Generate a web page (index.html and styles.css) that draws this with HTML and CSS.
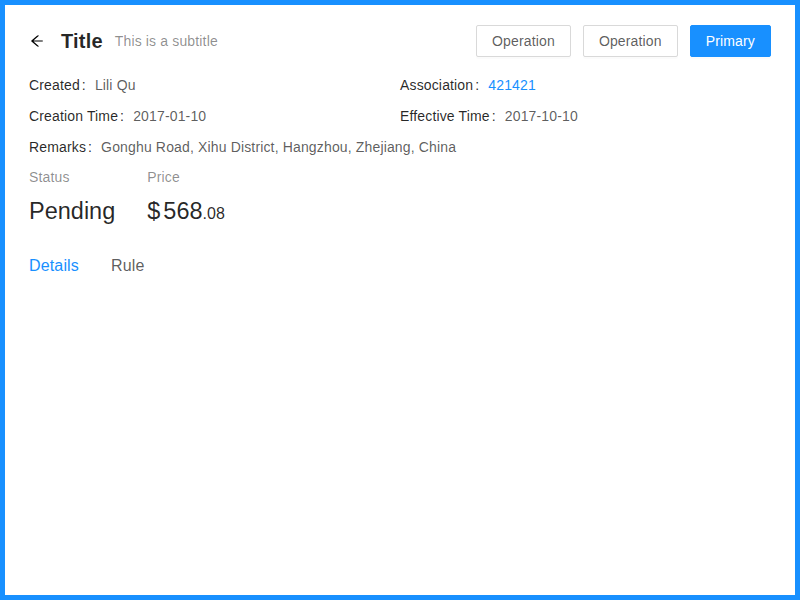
FILE: index.html
```html
<!DOCTYPE html>
<html>
<head>
<meta charset="utf-8">
<link rel="stylesheet" href="styles.css">
</head>
<body>
<div class="frame">
  <div class="page-header">
    <div class="heading">
      <div class="heading-left">
        <span class="back">
          <svg viewBox="0 0 1024 1024" width="16" height="16" fill="currentColor"><path d="M872 474H286.9l350.2-304c5.6-4.9 2.2-14-5.2-14h-88.5c-3.9 0-7.6 1.4-10.5 3.9L155 487.8a31.96 31.96 0 000 48.3L535.1 866c1.5 1.3 3.3 2 5.2 2h91.5c7.4 0 10.8-9.2 5.2-14L286.9 550H872c4.4 0 8-3.6 8-8v-60c0-4.4-3.6-8-8-8z"/></svg>
        </span>
        <span class="title">Title</span>
        <span class="subtitle">This is a subtitle</span>
      </div>
      <div class="extra">
        <button class="btn">Operation</button>
        <button class="btn">Operation</button>
        <button class="btn btn-primary">Primary</button>
      </div>
    </div>
    <div class="content">
      <div class="descriptions">
        <div class="item"><span class="label">Created</span><span class="value">Lili Qu</span></div>
        <div class="item"><span class="label">Association</span><span class="value link">421421</span></div>
        <div class="item"><span class="label">Creation Time</span><span class="value">2017-01-10</span></div>
        <div class="item"><span class="label">Effective Time</span><span class="value">2017-10-10</span></div>
        <div class="item full"><span class="label">Remarks</span><span class="value">Gonghu Road, Xihu District, Hangzhou, Zhejiang, China</span></div>
      </div>
      <div class="stats">
        <div class="stat">
          <div class="stat-title">Status</div>
          <div class="stat-value">Pending</div>
        </div>
        <div class="stat">
          <div class="stat-title">Price</div>
          <div class="stat-value"><span class="prefix">$</span><span class="int">568</span><span class="dec">.08</span></div>
        </div>
      </div>
    </div>
    <div class="tabs">
      <div class="tab active">Details</div>
      <div class="tab">Rule</div>
    </div>
  </div>
</div>
</body>
</html>
```

FILE: styles.css
```css
html, body {
  margin: 0;
  padding: 0;
}
body {
  font-family: "Liberation Sans", Arial, sans-serif;
  font-size: 14px;
  letter-spacing: 0.15px;
  color: rgba(0, 0, 0, 0.85);
  background: #fff;
}
.frame {
  box-sizing: border-box;
  width: 800px;
  height: 600px;
  border: 5px solid #1890ff;
}
.page-header {
  padding: 16px 24px;
}
.heading {
  display: flex;
  justify-content: space-between;
  align-items: center;
}
.heading-left {
  display: flex;
  align-items: center;
  margin: 4px 0;
}
.back {
  display: flex;
  align-items: center;
  width: 16px;
  height: 16px;
  margin-right: 16px;
  color: #000;
}
.title {
  font-size: 20px;
  font-weight: 700;
  line-height: 32px;
  letter-spacing: 0.2px;
  color: rgba(0, 0, 0, 0.85);
  margin-right: 12px;
}
.subtitle {
  font-size: 14px;
  line-height: 22px;
  color: rgba(0, 0, 0, 0.45);
}
.extra {
  display: flex;
  gap: 12px;
  margin: 4px 0;
}
.btn {
  font-family: inherit;
  font-size: 14px;
  letter-spacing: 0.15px;
  height: 32px;
  padding: 4px 15px;
  border: 1px solid #d9d9d9;
  border-radius: 2px;
  background: #fff;
  color: rgba(0, 0, 0, 0.65);
  box-shadow: 0 2px 0 rgba(0, 0, 0, 0.015);
  line-height: 22px;
}
.btn-primary {
  background: #1890ff;
  border-color: #1890ff;
  color: #fff;
}
.content {
  padding-top: 13px;
}
.descriptions {
  display: grid;
  grid-template-columns: 1fr 1fr;
  row-gap: 9px;
  padding-bottom: 8px;
}
.item {
  display: flex;
  line-height: 22px;
  font-size: 14px;
}
.item.full {
  grid-column: 1 / span 2;
}
.label {
  color: rgba(0, 0, 0, 0.85);
}
.label::after {
  content: ":";
  margin: 0 9px 0 2px;
}
.value {
  color: rgba(0, 0, 0, 0.65);
}
.value.link {
  color: #1890ff;
}
.stats {
  display: flex;
  gap: 32px;
}
.stat-title {
  font-size: 14px;
  line-height: 22px;
  color: rgba(0, 0, 0, 0.45);
  margin-bottom: 4px;
}
.stat-value {
  font-size: 23.5px;
  letter-spacing: 0;
  line-height: 38px;
  color: rgba(0, 0, 0, 0.85);
}
.prefix {
  margin-right: 3px;
}
.dec {
  font-size: 16px;
}
.tabs {
  display: flex;
  gap: 32px;
  margin-top: 9px;
}
.tab {
  font-size: 16px;
  line-height: 24px;
  padding: 12px 0;
  color: rgba(0, 0, 0, 0.65);
}
.tab.active {
  color: #1890ff;
}
```
